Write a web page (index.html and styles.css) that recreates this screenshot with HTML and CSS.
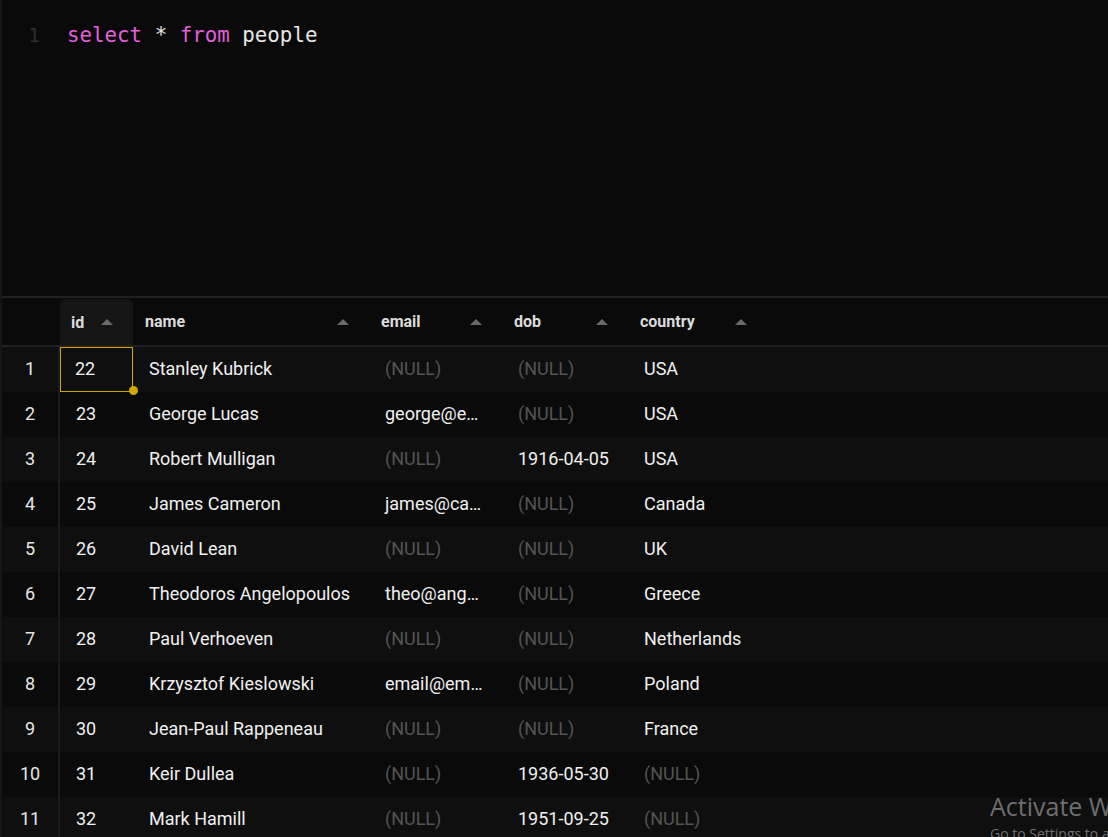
FILE: index.html
```html
<!DOCTYPE html>
<html lang="en">
<head>
<meta charset="utf-8">
<title>Query</title>
<link rel="stylesheet" href="styles.css">
</head>
<body>
<div class="app">
  <section class="editor">
    <div class="line">
      <span class="gutter">1</span>
      <code class="code"><span class="kw">select</span> * <span class="kw">from</span> people</code>
    </div>
  </section>
  <section class="results">
    <div class="grid">
      <div class="hrow">
        <div class="hcell rownum"></div>
        <div class="hcell active"><span>id</span><i class="arrow"></i></div>
        <div class="hcell"><span>name</span><i class="arrow"></i></div>
        <div class="hcell"><span>email</span><i class="arrow"></i></div>
        <div class="hcell"><span>dob</span><i class="arrow"></i></div>
        <div class="hcell"><span>country</span><i class="arrow"></i></div>
        <div class="hcell fill"></div>
      </div>

      <div class="row odd">
        <div class="cell rownum">1</div>
        <div class="cell selected">22<i class="handle"></i></div>
        <div class="cell">Stanley Kubrick</div>
        <div class="cell null">(NULL)</div>
        <div class="cell null">(NULL)</div>
        <div class="cell">USA</div>
        <div class="cell fill"></div>
      </div>
      <div class="row">
        <div class="cell rownum">2</div>
        <div class="cell">23</div>
        <div class="cell">George Lucas</div>
        <div class="cell trunc">george@example.com</div>
        <div class="cell null">(NULL)</div>
        <div class="cell">USA</div>
        <div class="cell fill"></div>
      </div>
      <div class="row odd">
        <div class="cell rownum">3</div>
        <div class="cell">24</div>
        <div class="cell">Robert Mulligan</div>
        <div class="cell null">(NULL)</div>
        <div class="cell">1916-04-05</div>
        <div class="cell">USA</div>
        <div class="cell fill"></div>
      </div>
      <div class="row">
        <div class="cell rownum">4</div>
        <div class="cell">25</div>
        <div class="cell">James Cameron</div>
        <div class="cell trunc">james@cameron.com</div>
        <div class="cell null">(NULL)</div>
        <div class="cell">Canada</div>
        <div class="cell fill"></div>
      </div>
      <div class="row odd">
        <div class="cell rownum">5</div>
        <div class="cell">26</div>
        <div class="cell">David Lean</div>
        <div class="cell null">(NULL)</div>
        <div class="cell null">(NULL)</div>
        <div class="cell">UK</div>
        <div class="cell fill"></div>
      </div>
      <div class="row">
        <div class="cell rownum">6</div>
        <div class="cell">27</div>
        <div class="cell">Theodoros Angelopoulos</div>
        <div class="cell trunc">theo@angelopoulos.com</div>
        <div class="cell null">(NULL)</div>
        <div class="cell">Greece</div>
        <div class="cell fill"></div>
      </div>
      <div class="row odd">
        <div class="cell rownum">7</div>
        <div class="cell">28</div>
        <div class="cell">Paul Verhoeven</div>
        <div class="cell null">(NULL)</div>
        <div class="cell null">(NULL)</div>
        <div class="cell">Netherlands</div>
        <div class="cell fill"></div>
      </div>
      <div class="row">
        <div class="cell rownum">8</div>
        <div class="cell">29</div>
        <div class="cell">Krzysztof Kieslowski</div>
        <div class="cell trunc">email@email.com</div>
        <div class="cell null">(NULL)</div>
        <div class="cell">Poland</div>
        <div class="cell fill"></div>
      </div>
      <div class="row odd">
        <div class="cell rownum">9</div>
        <div class="cell">30</div>
        <div class="cell">Jean-Paul Rappeneau</div>
        <div class="cell null">(NULL)</div>
        <div class="cell null">(NULL)</div>
        <div class="cell">France</div>
        <div class="cell fill"></div>
      </div>
      <div class="row">
        <div class="cell rownum">10</div>
        <div class="cell">31</div>
        <div class="cell">Keir Dullea</div>
        <div class="cell null">(NULL)</div>
        <div class="cell">1936-05-30</div>
        <div class="cell null">(NULL)</div>
        <div class="cell fill"></div>
      </div>
      <div class="row odd">
        <div class="cell rownum">11</div>
        <div class="cell">32</div>
        <div class="cell">Mark Hamill</div>
        <div class="cell null">(NULL)</div>
        <div class="cell">1951-09-25</div>
        <div class="cell null">(NULL)</div>
        <div class="cell fill"></div>
      </div>
    </div>
  </section>
  <div class="watermark">
    <div class="wm-title">Activate Windows</div>
    <div class="wm-sub">Go to Settings to activate Windows.</div>
  </div>
</div>
</body>
</html>
```

FILE: styles.css
```css
html, body {
  margin: 0;
  padding: 0;
  background: #0a0a0a;
  overflow: hidden;
}

.app {
  position: relative;
  width: 1108px;
  height: 837px;
  overflow: hidden;
  background: #0a0a0a;
  border-left: 2px solid #161616;
  box-sizing: border-box;
  font-family: Roboto, "Liberation Sans", sans-serif;
}

.editor {
  height: 298px;
  box-sizing: border-box;
  padding-top: 21px;
  border-bottom: 2px solid #212121;
}

.line {
  display: flex;
  align-items: center;
  height: 28px;
}

.gutter {
  width: 65px;
  box-sizing: border-box;
  padding-left: 26px;
  color: #2e2e2e;
  font-family: "DejaVu Sans Mono", "Liberation Mono", monospace;
  font-size: 20px;
}

.code {
  font-family: "DejaVu Sans Mono", "Liberation Mono", monospace;
  font-size: 20.8px;
  color: #e6e6e6;
  white-space: pre;
}

.kw {
  color: #e35fdc;
}

.grid {
  display: flex;
  flex-direction: column;
}

.hrow, .row {
  display: grid;
  grid-template-columns: 58px 73px 236px 133px 126px 139px 1fr;
}

.hrow {
  height: 49px;
  box-sizing: border-box;
  border-bottom: 2px solid #222;
}

.hcell {
  display: flex;
  align-items: center;
  justify-content: space-between;
  padding: 0 20px 0 12px;
  font-size: 16px;
  font-weight: 700;
  color: #dcdcdc;
}

.hcell.active {
  background: #151515;
  border-radius: 6px 6px 0 0;
  margin-top: 1px;
  padding-left: 11px;
}

.hcell.rownum, .hcell.fill {
  padding: 0;
}

.arrow {
  width: 0;
  height: 0;
  border-left: 6px solid transparent;
  border-right: 6px solid transparent;
  border-bottom: 6px solid #6a6a6a;
}

.row {
  height: 45px;
}

.row.odd {
  background: #0f0f0f;
}

.cell {
  position: relative;
  padding: 0 8px 0 16px;
  font-size: 18px;
  line-height: 43px;
  color: #f0f0f0;
  white-space: nowrap;
  min-width: 0;
}

.cell.trunc {
  overflow: hidden;
  text-overflow: ellipsis;
  padding-right: 17px;
}

.cell.rownum {
  text-align: center;
  padding: 0;
  border-right: 2px solid #1b1b1b;
  color: #e6e6e6;
}

.cell.null {
  color: #545454;
}

.cell.fill {
  padding: 0;
}

.cell.selected {
  box-shadow: inset 0 0 0 1px #d1a600;
  padding-left: 15px;
}

.handle {
  position: absolute;
  right: -5px;
  bottom: -3px;
  width: 9px;
  height: 9px;
  border-radius: 50%;
  background: #d1a600;
}

.watermark {
  position: absolute;
  left: 988px;
  top: 788px;
  color: #6e6e6e;
  font-family: "Open Sans", "Noto Sans", sans-serif;
  white-space: nowrap;
}

.wm-title {
  font-size: 25px;
  line-height: 36px;
}

.wm-sub {
  font-size: 14px;
  line-height: 20px;
}
```
